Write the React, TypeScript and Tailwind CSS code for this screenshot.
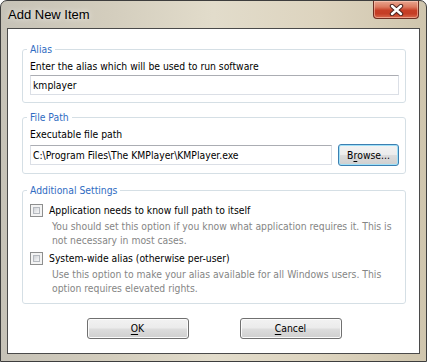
import type { ReactNode } from "react";

function WinButton({ children, primary, className }: { children: ReactNode; primary?: boolean; className?: string }) {
  return (
    <button
      type="button"
      className={`flex items-center justify-center rounded-[3px] border text-[10.3px] leading-none text-black ${
        primary
          ? "border-[#3c7fb1] shadow-[inset_0_0_0_1px_#9fe0f8] bg-[linear-gradient(180deg,#f3f3f3_0%,#ececec_48%,#dcdcdc_52%,#cfcfcf_100%)]"
          : "border-[#707070] shadow-[inset_0_0_0_1px_#fbfbfb] bg-[linear-gradient(180deg,#f2f2f2_0%,#ebebeb_48%,#dddddd_52%,#cfcfcf_100%)]"
      } ${className ?? ""}`}
    >
      {children}
    </button>
  );
}

function Checkbox() {
  return (
    <span className="flex h-[13px] w-[13px] shrink-0 items-center justify-center border border-[#8e8f8f] bg-[#f4f4f4] p-[2px]">
      <span className="block h-full w-full border border-[#b5b9bf] bg-[linear-gradient(135deg,#cfd2d6_0%,#e9eaec_60%,#f7f7f7_100%)]" />
    </span>
  );
}

function Group({ label, children, className }: { label: string; children: ReactNode; className?: string }) {
  return (
    <fieldset className={`rounded-[3px] border border-[#d5dfe5] ${className ?? ""}`}>
      <legend className="ml-[4px] px-[3px] text-[10.3px] leading-[14px] text-[#2f6cc2]">{label}</legend>
      {children}
    </fieldset>
  );
}

export default function App() {
  return (
    <div className="flex h-[362px] w-[427px] flex-col overflow-hidden rounded-t-[7px] border border-[#3d3d3d] bg-[linear-gradient(90deg,#c6c2b7_0%,#d3cdbd_25%,#e2dccb_50%,#ddd4bf_75%,#cfc5ad_100%)] px-[6px] font-['DejaVu_Sans_Condensed','Liberation_Sans',sans-serif]">
      <div className="flex h-[27px] shrink-0 items-start justify-between">
        <span className="pl-[1px] pt-[6px] font-['Liberation_Sans',Arial,sans-serif] text-[13px] leading-[15px] text-black [text-shadow:0_0_6px_rgba(255,255,255,0.9)]">Add New Item</span>
        <button
          type="button"
          aria-label="Close"
          className="mr-[1px] flex h-[18px] w-[46px] items-center justify-center rounded-b-[4px] border border-t-0 border-[#6e2e22] bg-[linear-gradient(180deg,#e9a690_0%,#dc7a60_35%,#c73f27_55%,#c53d25_75%,#d86a4e_100%)] shadow-[inset_0_0_0_1px_rgba(255,215,200,0.5)]"
        >
          <svg width="15" height="12" viewBox="0 0 15 12">
            <path d="M3 2 L12 10 M12 2 L3 10" stroke="#4e2520" strokeWidth="4.4" strokeLinecap="round" fill="none" />
            <path d="M3 2 L12 10 M12 2 L3 10" stroke="#ffffff" strokeWidth="2.4" strokeLinecap="round" fill="none" />
          </svg>
        </button>
      </div>

      <div className="flex h-[326px] shrink-0 flex-col border border-[#4a4a4a] bg-white pl-[14px] pr-[13px] pt-[13px] text-[10.3px] leading-[14px] text-black">
        <Group label="Alias">
          <div className="pb-[7px] pl-[7px] pr-[6px]">
            <div className="pt-[3px]">Enter the alias which will be used to run software</div>
            <div className="mt-[2px] flex h-[20px] items-center border border-[#dbdfe6] border-t-[#abadb3] px-[2px]">kmplayer</div>
          </div>
        </Group>

        <Group label="File Path" className="mt-[7px]">
          <div className="pb-[7px] pl-[7px] pr-[6px]">
            <div className="pt-[3px]">Executable file path</div>
            <div className="mt-[3px] flex h-[22px] items-center gap-[6px]">
              <div className="flex h-[20px] min-w-0 flex-1 items-center whitespace-nowrap border border-[#dbdfe6] border-t-[#abadb3] px-[2px]">
                C:\Program Files\The KMPlayer\KMPlayer.exe
              </div>
              <WinButton primary className="h-[22px] w-[61px]">
                B<span className="underline underline-offset-[2px]">r</span>owse...
              </WinButton>
            </div>
          </div>
        </Group>

        <Group label="Additional Settings" className="mt-[9px]">
          <div className="pb-[8px] pl-[7px] pr-[6px]">
            <div className="mt-[6px] flex h-[14px] items-center gap-[6px]">
              <Checkbox />
              <span>Application needs to know full path to itself</span>
            </div>
            <div className="mt-[2px] whitespace-nowrap pl-[22px] text-[#858585]">
              You should set this option if you know what application requires it. This is
              <br />
              not necessary in most cases.
            </div>
            <div className="mt-[4px] flex h-[14px] items-center gap-[6px]">
              <Checkbox />
              <span>System-wide alias (otherwise per-user)</span>
            </div>
            <div className="mt-[2px] whitespace-nowrap pl-[22px] text-[#858585]">
              Use this option to make your alias available for all Windows users. This
              <br />
              option requires elevated rights.
            </div>
          </div>
        </Group>

        <div className="mt-[14px] flex justify-center gap-[51px]">
          <WinButton className="h-[21px] w-[102px]">
            <span className="underline underline-offset-[2px]">O</span>K
          </WinButton>
          <WinButton className="h-[21px] w-[102px]">
            <span className="underline underline-offset-[2px]">C</span>ancel
          </WinButton>
        </div>
      </div>
    </div>
  );
}
